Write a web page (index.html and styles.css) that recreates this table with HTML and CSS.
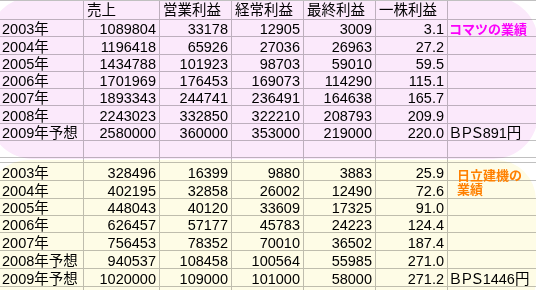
FILE: index.html
```html
<!DOCTYPE html>
<html lang="ja">

<head>
    <meta charset="UTF-8">
    <meta name="viewport" content="width=device-width, initial-scale=1.0">
    <title>業績</title>
    <link rel="stylesheet" href="styles.css">
</head>

<body>
    <div class="sheet">
        <div class="shape pink"></div>
        <div class="shape cream"></div>

        <div class="row h19">
            <div class="cell"></div>
            <div class="cell">売上</div>
            <div class="cell">営業利益</div>
            <div class="cell">経常利益</div>
            <div class="cell">最終利益</div>
            <div class="cell">一株利益</div>
            <div class="cell last"></div>
        </div>

        <!-- コマツ -->
        <div class="row h17">
            <div class="cell">2003年</div>
            <div class="cell num">1089804</div>
            <div class="cell num">33178</div>
            <div class="cell num">12905</div>
            <div class="cell num">3009</div>
            <div class="cell num">3.1</div>
            <div class="cell last"><span class="note komatsu">コマツの業績</span></div>
        </div>
        <div class="row h18">
            <div class="cell">2004年</div>
            <div class="cell num">1196418</div>
            <div class="cell num">65926</div>
            <div class="cell num">27036</div>
            <div class="cell num">26963</div>
            <div class="cell num">27.2</div>
            <div class="cell last"></div>
        </div>
        <div class="row h17">
            <div class="cell">2005年</div>
            <div class="cell num">1434788</div>
            <div class="cell num">101923</div>
            <div class="cell num">98703</div>
            <div class="cell num">59010</div>
            <div class="cell num">59.5</div>
            <div class="cell last"></div>
        </div>
        <div class="row h17">
            <div class="cell">2006年</div>
            <div class="cell num">1701969</div>
            <div class="cell num">176453</div>
            <div class="cell num">169073</div>
            <div class="cell num">114290</div>
            <div class="cell num">115.1</div>
            <div class="cell last"></div>
        </div>
        <div class="row h17">
            <div class="cell">2007年</div>
            <div class="cell num">1893343</div>
            <div class="cell num">244741</div>
            <div class="cell num">236491</div>
            <div class="cell num">164638</div>
            <div class="cell num">165.7</div>
            <div class="cell last"></div>
        </div>
        <div class="row h18">
            <div class="cell">2008年</div>
            <div class="cell num">2243023</div>
            <div class="cell num">332850</div>
            <div class="cell num">322210</div>
            <div class="cell num">208793</div>
            <div class="cell num">209.9</div>
            <div class="cell last"></div>
        </div>
        <div class="row h17">
            <div class="cell">2009年予想</div>
            <div class="cell num">2580000</div>
            <div class="cell num">360000</div>
            <div class="cell num">353000</div>
            <div class="cell num">219000</div>
            <div class="cell num">220.0</div>
            <div class="cell last bps">ＢＰＳ891円</div>
        </div>
        <div class="row h17">
            <div class="cell"></div>
            <div class="cell"></div>
            <div class="cell"></div>
            <div class="cell"></div>
            <div class="cell"></div>
            <div class="cell"></div>
            <div class="cell last"></div>
        </div>
        <div class="row h5">
            <div class="cell"></div>
            <div class="cell"></div>
            <div class="cell"></div>
            <div class="cell"></div>
            <div class="cell"></div>
            <div class="cell"></div>
            <div class="cell last"></div>
        </div>

        <!-- 日立建機 -->
        <div class="row h18">
            <div class="cell">2003年</div>
            <div class="cell num">328496</div>
            <div class="cell num">16399</div>
            <div class="cell num">9880</div>
            <div class="cell num">3883</div>
            <div class="cell num">25.9</div>
            <div class="cell last"><span class="note hitachi">日立建機の業績</span></div>
        </div>
        <div class="row h18">
            <div class="cell">2004年</div>
            <div class="cell num">402195</div>
            <div class="cell num">32858</div>
            <div class="cell num">26002</div>
            <div class="cell num">12490</div>
            <div class="cell num">72.6</div>
            <div class="cell last"></div>
        </div>
        <div class="row h17">
            <div class="cell">2005年</div>
            <div class="cell num">448043</div>
            <div class="cell num">40120</div>
            <div class="cell num">33609</div>
            <div class="cell num">17325</div>
            <div class="cell num">91.0</div>
            <div class="cell last"></div>
        </div>
        <div class="row h17">
            <div class="cell">2006年</div>
            <div class="cell num">626457</div>
            <div class="cell num">57177</div>
            <div class="cell num">45783</div>
            <div class="cell num">24223</div>
            <div class="cell num">124.4</div>
            <div class="cell last"></div>
        </div>
        <div class="row h18">
            <div class="cell">2007年</div>
            <div class="cell num">756453</div>
            <div class="cell num">78352</div>
            <div class="cell num">70010</div>
            <div class="cell num">36502</div>
            <div class="cell num">187.4</div>
            <div class="cell last"></div>
        </div>
        <div class="row h18">
            <div class="cell">2008年予想</div>
            <div class="cell num">940537</div>
            <div class="cell num">108458</div>
            <div class="cell num">100564</div>
            <div class="cell num">55985</div>
            <div class="cell num">271.0</div>
            <div class="cell last"></div>
        </div>
        <div class="row h18">
            <div class="cell">2009年予想</div>
            <div class="cell num">1020000</div>
            <div class="cell num">109000</div>
            <div class="cell num">101000</div>
            <div class="cell num">58000</div>
            <div class="cell num">271.2</div>
            <div class="cell last bps">ＢＰＳ1446円</div>
        </div>
        <div class="row h3">
            <div class="cell"></div>
            <div class="cell"></div>
            <div class="cell"></div>
            <div class="cell"></div>
            <div class="cell"></div>
            <div class="cell"></div>
            <div class="cell last"></div>
        </div>
    </div>
</body>

</html>
```

FILE: styles.css
```css
html,
body {
    margin: 0;
    background-color: #ffffff;
    overflow: hidden;
}

.sheet {
    position: relative;
    width: 536px;
    height: 289px;
    overflow: hidden;
    border-top: 1px solid #c0c0c0;
    font-family: "Liberation Sans", "Noto Sans CJK JP", sans-serif;
    font-size: 14.5px;
    line-height: 12px;
    color: #000000;
}

/* the two coloured boxes drawn over the cells */
.shape {
    position: absolute;
    z-index: 1;
    pointer-events: none;
    mix-blend-mode: multiply;
}

.pink {
    left: -12px;
    top: -4px;
    width: 550px;
    height: 162px;
    border-radius: 45px;
    background-color: #fbe9fb;
}

.cream {
    left: -12px;
    top: 159px;
    width: 548px;
    height: 160px;
    border-radius: 40px;
    background-color: #fefce6;
}

.row {
    display: grid;
    grid-template-columns: 84px 76px 72px 72px 72px 72px 1fr;
}

.h3 {
    height: 3px;
}

.h5 {
    height: 5px;
}

.h17 {
    height: 17px;
}

.h18 {
    height: 18px;
}

.h19 {
    height: 19px;
}

.cell {
    position: relative;
    display: flex;
    align-items: flex-end;
    box-sizing: border-box;
    padding: 0 3px 1px 3px;
    border-right: 1px solid #c0c0c0;
    border-bottom: 1px solid #c0c0c0;
    white-space: nowrap;
    overflow: visible;
}

.cell:first-child {
    padding-left: 2px;
}

.h19 .cell {
    align-items: center;
    padding-bottom: 0;
}

.h3 .cell {
    border-bottom: none;
}

.num {
    justify-content: flex-end;
}

.last {
    border-right: none;
    padding-left: 1px;
}

.bps {
    font-feature-settings: "palt";
}

.note {
    font-family: "Noto Sans CJK JP", sans-serif;
    font-weight: bold;
    font-size: 13px;
}

.komatsu {
    color: #ff00ff;
}

.hitachi {
    position: absolute;
    z-index: 2;
    left: 9px;
    top: 5px;
    width: 68px;
    white-space: normal;
    line-height: 14px;
    color: #ff8000;
}
```
